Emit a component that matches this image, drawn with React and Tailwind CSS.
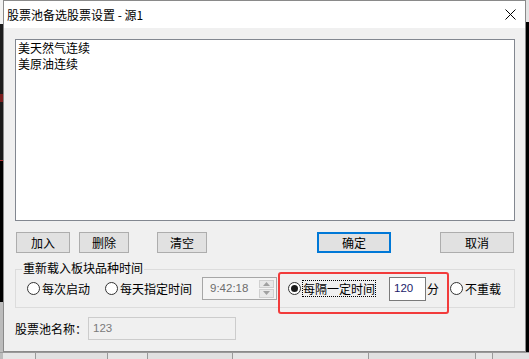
import React from "react";

const cjk = "font-['Noto_Sans_CJK_SC','Microsoft_YaHei',sans-serif]";

function Radio({ checked }) {
  return (
    <span className="w-[13px] h-[13px] rounded-full border border-[#333333] bg-white flex items-center justify-center shrink-0">
      {checked && <span className="w-[7px] h-[7px] rounded-full bg-[#1a1a1a]" />}
    </span>
  );
}

function Btn({ children, className, primary }) {
  const b = primary ? "border-2 border-[#0078d7]" : "border border-[#adadad]";
  return (
    <div
      className={
        "h-[21px] bg-[#e1e1e1] text-[12px] leading-none flex items-center justify-center text-black " +
        b +
        " " +
        className
      }
    >
      {children}
    </div>
  );
}

export default function App() {
  return (
    <div className={"w-[529px] h-[359px] overflow-hidden flex flex-col bg-[#111111] " + cjk}>
      <div className="flex h-[352px]">
        {/* left strip of background app */}
        <div className="w-[3px] flex flex-col">
          <div className="h-[24px] bg-[#f2f2f2]" />
          <div className="h-[70px] bg-[#1d1d1d]" />
          <div className="h-[8px] bg-[#7a1f1f]" />
          <div className="h-[58px] bg-[#1b1b1b]" />
          <div className="h-[1px] bg-[#b03030]" />
          <div className="flex-1 bg-black" />
          <div className="h-[50px] bg-[#bcbcbc]" />
        </div>

        {/* dialog */}
        <div className="w-[523px] h-[352px] border border-[#8a8a8a] flex flex-col bg-[#f0f0f0]">
          <div className="h-[27px] bg-white flex items-center justify-between pl-[3px] pr-[9px]">
            <span className="text-[12px] leading-none text-black">股票池备选股票设置 - 源1</span>
            <svg width="11" height="11" viewBox="0 0 11 11" className="block">
              <path d="M0.5 0.5 L10.5 10.5 M10.5 0.5 L0.5 10.5" stroke="#000" strokeWidth="1" fill="none" />
            </svg>
          </div>

          <div className="flex-1 pl-[11px] pr-[10px] pt-[11px] flex flex-col">
            {/* list */}
            <div className="h-[182px] border border-[#828790] bg-white pl-[2px] text-[12px] leading-[16px] text-black">
              <div>美天然气连续</div>
              <div>美原油连续</div>
            </div>

            {/* buttons */}
            <div className="flex mt-[11px]">
              <Btn className="ml-[1px] w-[54px]">加入</Btn>
              <Btn className="ml-[9px] w-[50px]">删除</Btn>
              <Btn className="ml-[28px] w-[50px]">清空</Btn>
              <Btn primary className="ml-[110px] w-[74px]">确定</Btn>
              <Btn className="ml-[49px] w-[74px]">取消</Btn>
            </div>

            {/* group box */}
            <div className="relative mt-[16px] h-[39px] border border-[#dcdcdc] pt-[7px] pl-[11px]">
              <span className="absolute left-[6px] top-[-9px] px-[1px] bg-[#f0f0f0] text-[12px] leading-[14px] text-black">
                重新载入板块品种时间
              </span>
              <div className="flex items-center h-[23px] text-[12px] leading-none text-black">
                <Radio />
                <span className="ml-[2px]">每次启动</span>
                <span className="ml-[15px]"><Radio /></span>
                <span className="ml-[2px]">每天指定时间</span>
                <div className="ml-[10px] w-[75px] h-[23px] border border-[#a6a6a6] bg-[#f4f4f4] flex items-center justify-between pl-[7px] pr-[2px]">
                  <span className="font-['Liberation_Sans',sans-serif] text-[11.5px] text-[#6d6d6d]">9:42:18</span>
                  <div className="flex flex-col w-[15px] h-[18px] gap-[1px]">
                    <div className="flex-1 bg-[#e8e8e8] border border-[#d0d0d0] flex items-center justify-center">
                      <svg width="7" height="4" viewBox="0 0 7 4"><path d="M0 4 L3.5 0 L7 4 Z" fill="#a0a0a0" /></svg>
                    </div>
                    <div className="flex-1 bg-[#e8e8e8] border border-[#d0d0d0] flex items-center justify-center">
                      <svg width="7" height="4" viewBox="0 0 7 4"><path d="M0 0 L3.5 4 L7 0 Z" fill="#a0a0a0" /></svg>
                    </div>
                  </div>
                </div>
                <span className="ml-[11px]"><Radio checked /></span>
                <span className="ml-[1px] px-[1px] h-[17px] flex items-center outline outline-1 outline-dotted outline-black -outline-offset-1">
                  每隔一定时间
                </span>
                <div className="ml-[13px] w-[37px] h-[24px] border border-[#7a7a7a] bg-white flex items-center pl-[4px]">
                  <span className="font-['Liberation_Sans',sans-serif] text-[11.5px] text-[#1c1c6a]">120</span>
                </div>
                <span className="ml-[1px]">分</span>
                <span className="ml-[11px]"><Radio /></span>
                <span className="ml-[2px]">不重载</span>
              </div>
              <div className="absolute left-[262px] top-[2px] w-[171px] h-[42px] border-2 border-[#f23b3b] rounded-[3px] pointer-events-none" />
            </div>

            {/* name */}
            <div className="flex items-center mt-[9px] text-[12px] leading-none text-black">
              <span>股票池名称：</span>
              <div className="ml-[1px] w-[148px] h-[23px] border border-[#cccccc] bg-[#f0f0f0] flex items-center pl-[4px]">
                <span className="font-['Liberation_Sans',sans-serif] text-[11.5px] text-[#7a7a7a]">123</span>
              </div>
            </div>
          </div>
        </div>

        {/* right strip */}
        <div className="flex-1 flex flex-col">
          <div className="h-[22px] bg-[#e4e4e4]" />
          <div className="flex-1 bg-black" />
        </div>
      </div>

      {/* bottom strip of background app */}
      <div className="h-[7px] bg-[#e6e6e6] flex border-t border-[#9a9a9a]">
        <div className="w-[3px] bg-[#bcbcbc]" />
        <div className="ml-[32px] w-[73px] border-x border-[#9a9a9a] bg-[#e1e1e1]" />
        <div className="ml-[39px] w-[86px] border-x border-[#9a9a9a] bg-[#e1e1e1]" />
        <div className="ml-[135px] w-[108px] border-x border-[#9a9a9a] bg-[#e1e1e1]" />
        <div className="ml-[16px] flex-1 border-l border-[#9a9a9a] bg-[#e1e1e1]" />
      </div>
    </div>
  );
}
